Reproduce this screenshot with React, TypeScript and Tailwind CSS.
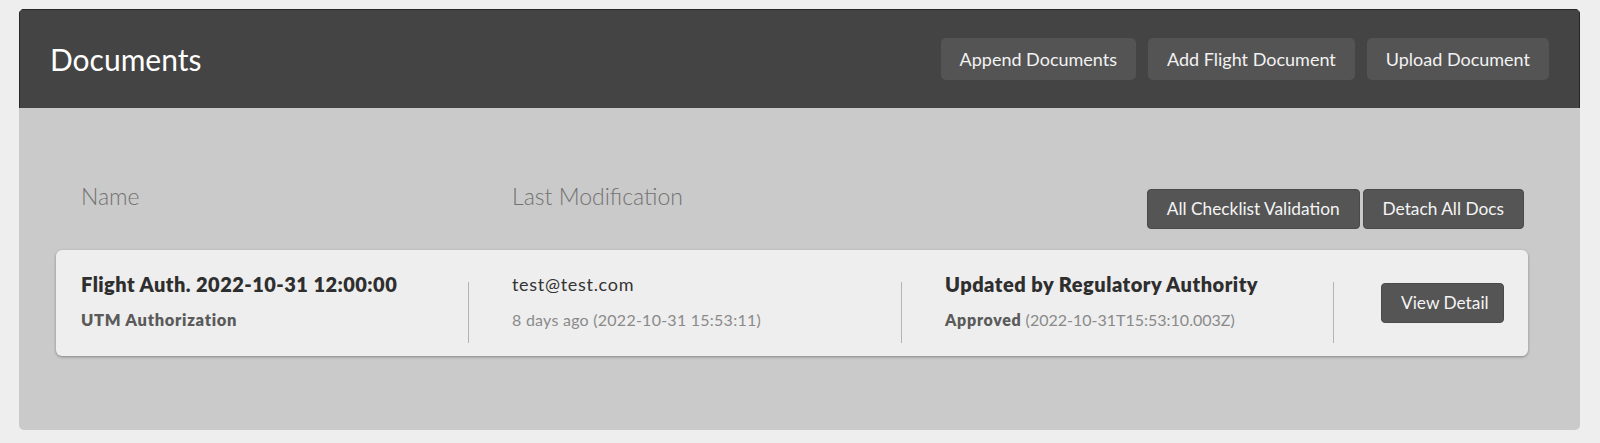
import React from "react";

const font = { fontFamily: "Lato, 'Open Sans', sans-serif" };

const HeaderButton = ({ label }: { label: string }) => (
  <button className="h-[42px] whitespace-nowrap rounded-[5px] bg-[#545454] px-[19px] text-[18px] text-[#f2f2f2]">
    {label}
  </button>
);

const DarkButton = ({ label, className = "" }: { label: string; className?: string }) => (
  <button
    className={
      "h-[40px] whitespace-nowrap rounded-[4px] border border-[#4a4a4a] bg-[#555555] px-[19px] text-[17.3px] text-[#f4f4f4] " +
      className
    }
  >
    {label}
  </button>
);

const Divider = () => <div className="mt-[9px] h-[61px] w-px shrink-0 bg-[#b4b4b4]" />;

export default function App() {
  return (
    <div className="min-h-[443px] bg-[#eeeeee] pt-[9px] pl-[19px] pr-[20px] pb-[13px]" style={font}>
      <div className="overflow-hidden rounded-[5px]">
        {/* header */}
        <header className="flex h-[99px] items-center justify-between border-t border-l border-r border-[#262626] bg-[#444444] pl-[30px] pr-[30px]">
          <h1 className="text-[30px] text-white">Documents</h1>
          <div className="flex gap-[12px]">
            <HeaderButton label="Append Documents" />
            <HeaderButton label="Add Flight Document" />
            <HeaderButton label="Upload Document" />
          </div>
        </header>

        {/* body */}
        <div className="h-[322px] bg-[#cacaca] pt-[75px] pl-[37px] pr-[52px]">
          <div className="flex items-start pl-[25px] pr-[4px]">
            <div className="w-[431px] text-[23px] font-light leading-[1.2] text-[#727272]">Name</div>
            <div className="text-[23px] font-light leading-[1.2] text-[#727272]">Last Modification</div>
            <div className="ml-auto mt-[6px] flex gap-[3px]">
              <DarkButton label="All Checklist Validation" />
              <DarkButton label="Detach All Docs" />
            </div>
          </div>

          <div className="mt-[21px] flex h-[106px] items-start rounded-[6px] bg-[#eeeeee] pt-[23px] pl-[25px] shadow-[0_1px_3px_rgba(0,0,0,0.35)]">
            <div className="w-[387px] shrink-0">
              <div className="whitespace-nowrap text-[20px] font-extrabold leading-[22px] tracking-[0.45px] text-[#2e2e2e]">
                Flight Auth. 2022-10-31 12:00:00
              </div>
              <div className="mt-[15px] whitespace-nowrap text-[16.5px] font-extrabold leading-[20px] tracking-[0.7px] text-[#5a5a5a]">
                UTM Authorization
              </div>
            </div>
            <Divider />
            <div className="ml-[43px] w-[389px] shrink-0">
              <div className="text-[18px] leading-[22px] tracking-[0.7px] text-[#333333]">test@test.com</div>
              <div className="mt-[15px] whitespace-nowrap text-[16px] leading-[20px] tracking-[0.25px] text-[#8a8a8a]">
                8 days ago (2022-10-31 15:53:11)
              </div>
            </div>
            <Divider />
            <div className="ml-[43px] w-[388px] shrink-0">
              <div className="whitespace-nowrap text-[20px] font-extrabold leading-[22px] tracking-[0.5px] text-[#2e2e2e]">
                Updated by Regulatory Authority
              </div>
              <div className="mt-[15px] whitespace-nowrap text-[16px] leading-[20px] text-[#8a8a8a]">
                <span className="font-extrabold tracking-[0.7px] text-[#5a5a5a]">Approved</span> (2022-10-31T15:53:10.003Z)
              </div>
            </div>
            <Divider />
            <DarkButton label="View Detail" className="ml-[47px] mt-[10px] h-[39px] w-[123px] px-0" />
          </div>
        </div>
      </div>
    </div>
  );
}
